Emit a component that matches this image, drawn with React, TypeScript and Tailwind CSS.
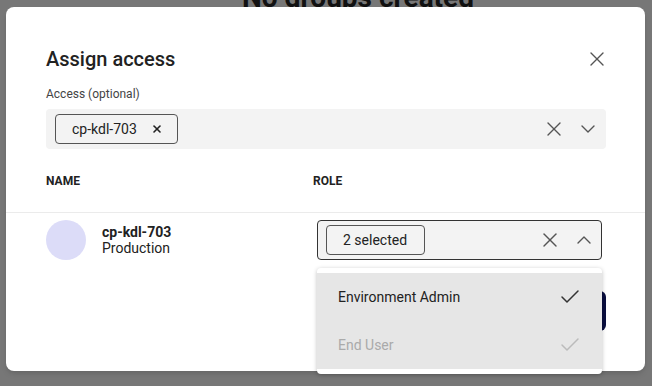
import { X, ChevronDown, ChevronUp, Check } from "lucide-react";

export default function App() {
  const roles = [
    { name: "Environment Admin", enabled: true },
    { name: "End User", enabled: false },
  ];

  return (
    <div className="relative w-[652px] h-[386px] overflow-hidden bg-[#777777] font-['Roboto',sans-serif]">
      {/* page behind the overlay */}
      <div className="absolute left-[358px] top-[-18px] -translate-x-1/2 whitespace-nowrap text-[28px] leading-[32px] font-bold text-[#111]">
        No groups created
      </div>

      <div className="relative pt-[7px] pl-[6px]">
        <div className="w-[639px] h-[364px] rounded-[8px] bg-white shadow-md">
          <div className="px-[40px] pt-[40px]">
            <div className="flex items-center justify-between">
              <h2 className="text-[20px] leading-[24px] font-medium text-[#222]">Assign access</h2>
              <button className="-mr-[4px] text-[#555]">
                <X size={24} strokeWidth={1.4} />
              </button>
            </div>

            <div className="mt-[15px] text-[12px] leading-[16px] text-[#444]">Access (optional)</div>
            <div className="mt-[7px] flex h-[40px] w-[560px] items-center rounded-[4px] bg-[#f3f3f3] pl-[9px] pr-[6px]">
              <div className="flex h-[30px] items-center gap-[14px] rounded-[4px] border border-[#555] pl-[16px] pr-[14px] text-[14px] text-[#222]">
                cp-kdl-703
                <X size={12} strokeWidth={3.2} className="text-[#222]" />
              </div>
              <div className="ml-auto flex items-center gap-[10px] text-[#555]">
                <X size={24} strokeWidth={1.4} />
                <ChevronDown size={24} strokeWidth={1.4} />
              </div>
            </div>
          </div>

          {/* table */}
          <div className="mt-[24px] flex border-b border-[#ebebeb] px-[40px] pb-[23px] text-[12px] leading-[16px] font-bold text-[#222]">
            <div className="w-[267px]">NAME</div>
            <div>ROLE</div>
          </div>

          <div className="flex px-[40px] pt-[7px]">
            <div className="flex w-[271px] items-center gap-[16px]">
              <div className="h-[40px] w-[40px] rounded-full bg-[#dcdcf8]" />
              <div className="text-[#222]">
                <div className="text-[14px] leading-[16px] font-bold">cp-kdl-703</div>
                <div className="text-[14px] leading-[16px]">Production</div>
              </div>
            </div>

            <div className="relative z-10">
              <div className="flex h-[40px] w-[285px] items-center rounded-[4px] border border-[#333] bg-[#f3f3f3] pl-[8px] pr-[5px]">
                <div className="flex h-[30px] items-center rounded-[4px] border border-[#555] pl-[16px] pr-[17px] text-[14px] text-[#222]">
                  2 selected
                </div>
                <div className="ml-auto flex items-center gap-[10px] text-[#555]">
                  <X size={24} strokeWidth={1.4} />
                  <ChevronUp size={24} strokeWidth={1.4} />
                </div>
              </div>

              {/* dropdown menu */}
              <div className="absolute left-0 top-[48px] w-[285px] rounded-[4px] bg-white py-[5px] shadow-[0_1px_4px_rgba(0,0,0,0.25)]">
                <ul className="bg-[#e6e6e6]">
                  {roles.map((r) => (
                    <li
                      key={r.name}
                      className={`flex h-[48px] items-center justify-between pl-[21px] pr-[20px] text-[14px] ${
                        r.enabled ? "text-[#222]" : "text-[#aaa]"
                      }`}
                    >
                      {r.name}
                      <Check
                        size={24}
                        strokeWidth={1.5}
                        className={r.enabled ? "text-[#333]" : "text-[#bbb]"}
                      />
                    </li>
                  ))}
                </ul>
              </div>
            </div>
          </div>

          <div className="mt-[31px] flex justify-end px-[39px]">
            <button className="h-[40px] rounded-[6px] bg-[#0a0e3f] px-[24px] text-[14px] font-medium text-white">
              Save
            </button>
          </div>
        </div>
      </div>
    </div>
  );
}
